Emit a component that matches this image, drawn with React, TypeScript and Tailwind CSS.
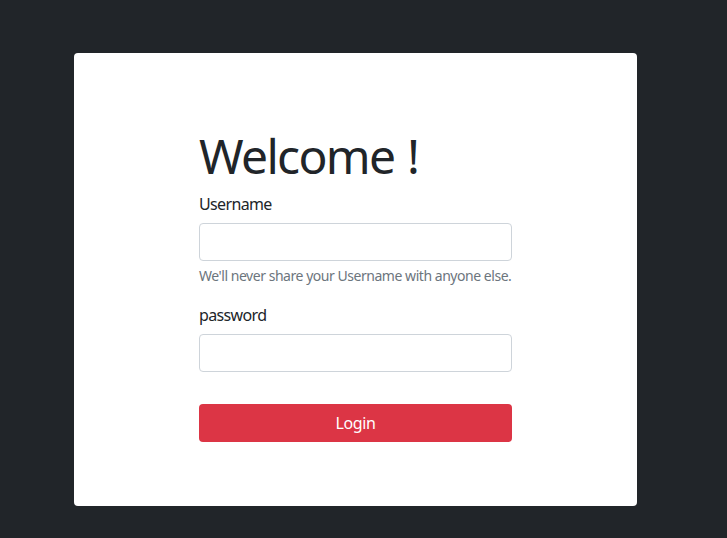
import React from "react";

export default function App() {
  return (
    <div className="min-h-[538px] w-full bg-[#212529] pt-[53px] pb-[32px] tracking-[-0.025em]" style={{ fontFamily: '"Noto Sans", "Open Sans", sans-serif' }}>
      <div className="ml-[74px] w-[563px] h-[453px] bg-white rounded-[4px] pt-[74px]">
        <div className="mx-auto w-[313px] text-[#212529]">
          <h1 className="text-[48px] leading-[57px] mb-[8px] font-normal whitespace-nowrap tracking-[-0.035em]">Welcome<span className="tracking-normal"> </span>!</h1>
          <label className="block text-[16px] leading-[24px] mb-[7px] tracking-[-0.04em]">Username</label>
          <input type="text" className="block w-full h-[38px] border border-[#ced4da] rounded-[4px] px-3 outline-none" />
          <div className="mt-[4px] text-[14px] leading-[21px] text-[#6c757d] whitespace-nowrap tracking-[-0.033em]">We'll never share your Username with anyone else.</div>
          <label className="block mt-[17px] text-[16px] leading-[24px] mb-[7px] tracking-[-0.04em]">password</label>
          <input type="password" className="block w-full h-[38px] border border-[#ced4da] rounded-[4px] px-3 outline-none" />
          <button className="mt-[32px] block w-full h-[38px] bg-[#dc3545] text-white text-[16px] rounded-[4px]">Login</button>
        </div>
      </div>
    </div>
  );
}
